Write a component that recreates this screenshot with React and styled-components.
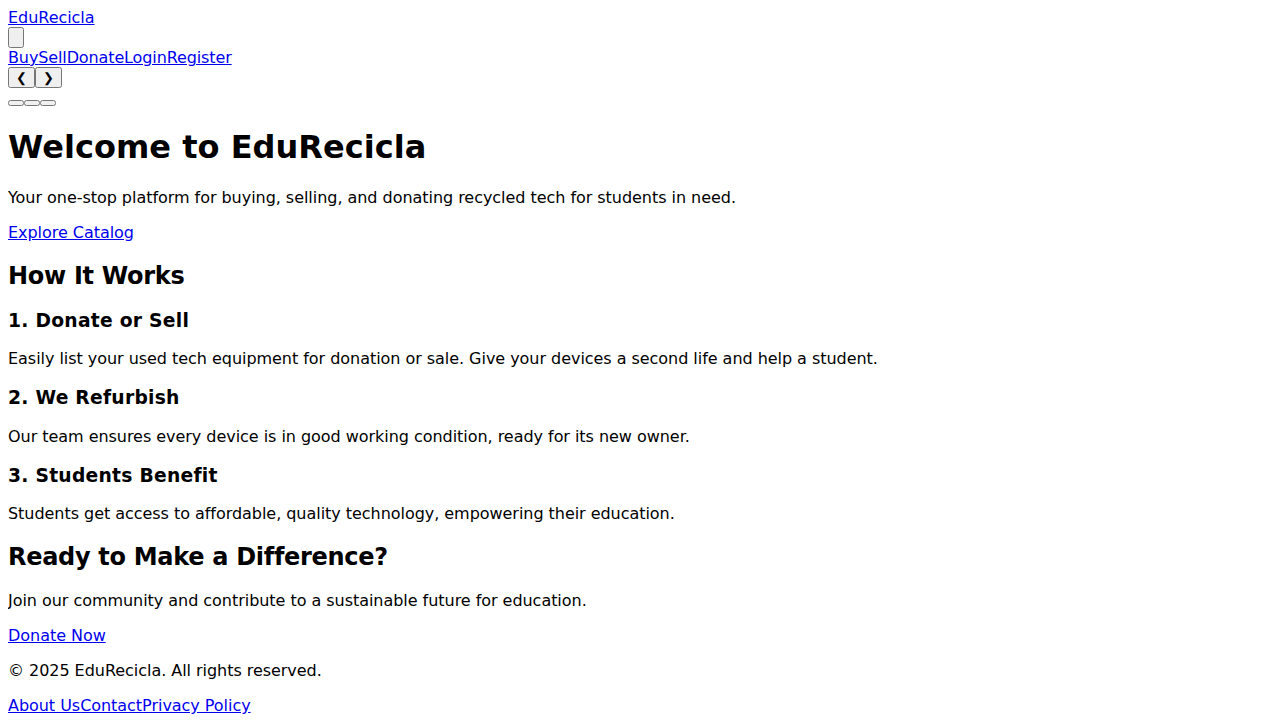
import React from "react";
import styled, { createGlobalStyle } from "styled-components";

const GlobalStyle = createGlobalStyle`
  body {
    margin: 8px;
    font-family: "DejaVu Sans", sans-serif;
    font-size: 16px;
    letter-spacing: -0.04px;
    color: #000;
    background: #fff;
  }
`;

const Header = styled.header``;

const Logo = styled.div``;

const Link = styled.a`
  color: #0000ee;
  text-decoration: underline;
`;

const MenuToggle = styled.button``;

const Nav = styled.nav`
  letter-spacing: -0.12px;
`;

const Carousel = styled.div``;

const Arrow = styled.button``;

const Dots = styled.div``;

const Dot = styled.button``;

const Hero = styled.section``;

const Title = styled.h1`
  font-size: 32px;
  margin: 21.44px 0;
  letter-spacing: 0.03px;
`;

const Text = styled.p`
  margin: 16px 0;
`;

const Section = styled.section``;

const SectionTitle = styled.h2`
  font-size: 24px;
  margin: 19.92px 0;
  letter-spacing: -0.3px;
`;

const Step = styled.div``;

const StepTitle = styled.h3`
  font-size: 18.72px;
  margin: 18.72px 0;
  letter-spacing: 0.26px;
`;

const Footer = styled.footer``;

const FooterLinks = styled.div``;

const steps = [
  {
    title: "1. Donate or Sell",
    text: "Easily list your used tech equipment for donation or sale. Give your devices a second life and help a student.",
  },
  {
    title: "2. We Refurbish",
    text: "Our team ensures every device is in good working condition, ready for its new owner.",
  },
  {
    title: "3. Students Benefit",
    text: "Students get access to affordable, quality technology, empowering their education.",
  },
];

const App = () => {
  return (
    <>
      <GlobalStyle />
      <Header>
        <Logo>
          <Link href="#">EduRecicla</Link>
        </Logo>
        <MenuToggle aria-label="menu">{"\u200B"}</MenuToggle>
        <Nav>
          <Link href="#">Buy</Link>
          <Link href="#">Sell</Link>
          <Link href="#">Donate</Link>
          <Link href="#">Login</Link>
          <Link href="#">Register</Link>
        </Nav>
      </Header>
      <Carousel>
        <Arrow>❮</Arrow>
        <Arrow>❯</Arrow>
        <Dots>
          <Dot aria-label="slide 1" />
          <Dot aria-label="slide 2" />
          <Dot aria-label="slide 3" />
        </Dots>
      </Carousel>
      <Hero>
        <Title>Welcome to EduRecicla</Title>
        <Text>
          Your one-stop platform for buying, selling, and donating recycled tech
          for students in need.
        </Text>
        <Text>
          <Link href="#">Explore Catalog</Link>
        </Text>
      </Hero>
      <Section>
        <SectionTitle>How It Works</SectionTitle>
        {steps.map((s) => (
          <Step key={s.title}>
            <StepTitle>{s.title}</StepTitle>
            <Text>{s.text}</Text>
          </Step>
        ))}
      </Section>
      <Section>
        <SectionTitle>Ready to Make a Difference?</SectionTitle>
        <Text>
          Join our community and contribute to a sustainable future for
          education.
        </Text>
        <Text>
          <Link href="#">Donate Now</Link>
        </Text>
      </Section>
      <Footer>
        <Text>© 2025 EduRecicla. All rights reserved.</Text>
        <FooterLinks>
          <Link href="#">About Us</Link>
          <Link href="#">Contact</Link>
          <Link href="#">Privacy Policy</Link>
        </FooterLinks>
      </Footer>
    </>
  );
};

export default App;
